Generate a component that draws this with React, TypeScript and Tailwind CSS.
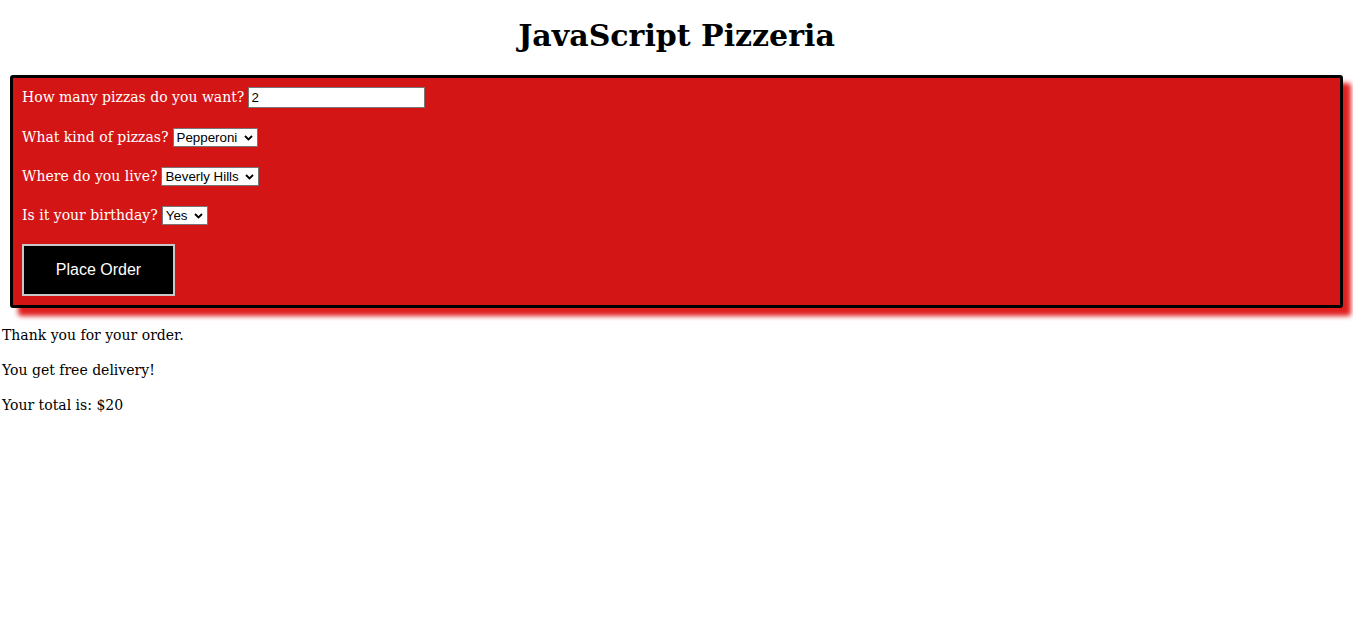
import React, { useState } from 'react';

const serif = "font-['DejaVu_Serif',Georgia,serif]";

const Chevron = () => (
    <svg className="pointer-events-none absolute right-[5px] top-1/2 -translate-y-1/2" width="9" height="6" viewBox="0 0 9 6">
        <path d="M1 1 L4.5 4.5 L8 1" fill="none" stroke="#000" strokeWidth="1.8" />
    </svg>
);

const Select: React.FC<{ value: string; options: string[]; width: string; onChange: (v: string) => void }> = ({ value, options, width, onChange }) => (
    <span className="relative inline-block align-middle">
        <select
            value={value}
            onChange={(e) => onChange(e.target.value)}
            className={`${width} h-[19px] appearance-none border border-[#767676] bg-white pl-[3px] text-[13.33px] leading-[17px] text-black font-['Liberation_Sans',Arial,sans-serif]`}
        >
            {options.map((o) => (
                <option key={o}>{o}</option>
            ))}
        </select>
        <Chevron />
    </span>
);

export default function App() {
    const [count, setCount] = useState('2');
    const [kind, setKind] = useState('Pepperoni');
    const [place, setPlace] = useState('Beverly Hills');
    const [birthday, setBirthday] = useState('Yes');

    return (
        <div className={`${serif} min-h-[626px] bg-white text-black text-[14px]`}>
            <h1 className="pt-[17px] pb-[21px] text-center text-[30px] font-bold leading-[37px]">JavaScript Pizzeria</h1>

            {/* Order form */}
            <form
                onSubmit={(e) => e.preventDefault()}
                className="mx-[10px] rounded-[3px] border-[3px] border-black bg-[#d41515] px-[9px] pt-[9px] pb-[9px] text-white shadow-[8px_8px_5px_#e02020]"
            >
                <div className="flex h-[21px] items-center">
                    <span>How many pizzas do you want?</span>
                    <input
                        type="text"
                        value={count}
                        onChange={(e) => setCount(e.target.value)}
                        className="ml-[4px] h-[21px] w-[177px] border border-[#767676] bg-white px-[2px] text-[13.33px] text-black font-['Liberation_Sans',Arial,sans-serif]"
                    />
                </div>
                <div className="mt-[20px] flex h-[19px] items-center gap-[4px]">
                    <span>What kind of pizzas?</span>
                    <Select value={kind} onChange={setKind} width="w-[85px]" options={['Pepperoni', 'Cheese', 'Veggie']} />
                </div>
                <div className="mt-[20px] flex h-[19px] items-center gap-[4px]">
                    <span>Where do you live?</span>
                    <Select value={place} onChange={setPlace} width="w-[98px]" options={['Beverly Hills', 'Other']} />
                </div>
                <div className="mt-[20px] flex h-[19px] items-center gap-[4px]">
                    <span>Is it your birthday?</span>
                    <Select value={birthday} onChange={setBirthday} width="w-[46px]" options={['Yes', 'No']} />
                </div>
                <button
                    type="submit"
                    className="mt-[19px] h-[52px] w-[153px] border-2 border-[#c8c8c8] bg-black text-[16px] text-white font-['Liberation_Sans',Arial,sans-serif]"
                >
                    Place Order
                </button>
            </form>

            {/* Result */}
            <div className="px-[2px] pt-[18px] leading-[19px]">
                <p>Thank you for your order.</p>
                <p className="mt-[16px]">You get free delivery!</p>
                <p className="mt-[16px]">Your total is: $20</p>
            </div>
        </div>
    );
}
